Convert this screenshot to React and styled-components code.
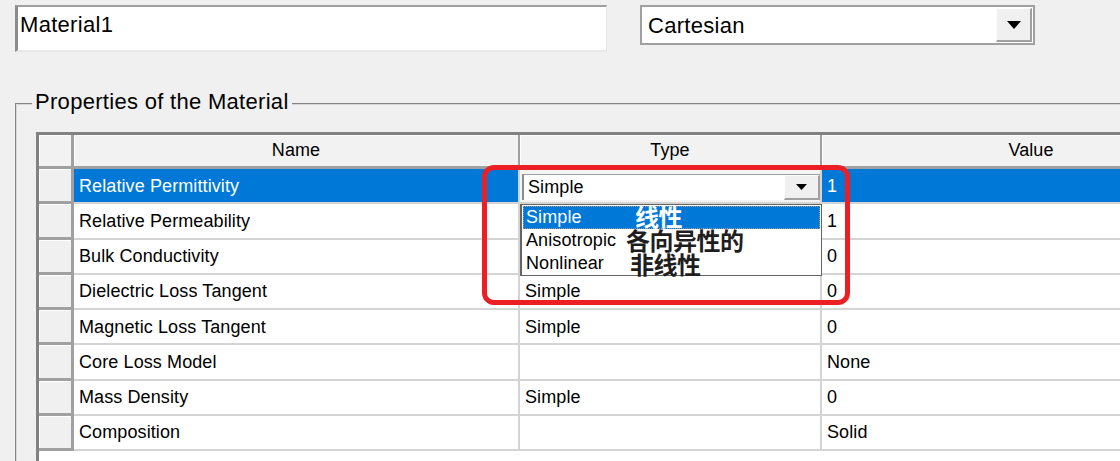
import React from "react";
import styled, { createGlobalStyle } from "styled-components";

const Global = createGlobalStyle`
  html, body { margin: 0; padding: 0; background: #f0f0f0; }
  body { overflow: hidden; }
  * { box-sizing: border-box; }
`;

const Page = styled.div`
  position: relative;
  width: 1120px;
  height: 461px;
  overflow: hidden;
  background: #f0f0f0;
  font-family: "Liberation Sans", Arial, sans-serif;
  color: #000;
`;

const TopRow = styled.div`
  display: grid;
  grid-template-columns: 592px 395px;
  column-gap: 33px;
  padding: 5px 0 0 15px;
  align-items: start;
`;

const TextBox = styled.div`
  height: 47px;
  background: #fff;
  border-top: 2px solid #a0a0a0;
  border-left: 3px solid #8c8c8c;
  border-right: 1px solid #e3e3e3;
  border-bottom: 2px solid #e8e8e8;
  padding: 5px 2px;
  font-size: 22px;
  line-height: 26px;
  letter-spacing: 0.3px;
`;

const Combo = styled.div`
  height: 40px;
  display: flex;
  align-items: stretch;
  background: #fff;
  border: 2px solid #a0a0a0;
  padding: 1px 1px 1px 0;
`;

const ComboText = styled.div`
  flex: 1;
  display: flex;
  align-items: center;
  padding: 1px 0 0 6px;
  font-size: 22px;
  letter-spacing: 0.3px;
`;

const DropButton = styled.div`
  width: ${(p) => p.$w}px;
  display: flex;
  align-items: center;
  justify-content: center;
  background: #f0f0f0;
  border-top: 1px solid #fdfdfd;
  border-left: 1px solid #fdfdfd;
  border-right: 2px solid #a0a0a0;
  border-bottom: 2px solid #a0a0a0;
`;

const Arrow = ({ w, h }) => (
  <svg width={w} height={h} viewBox={`0 0 ${w} ${h}`}>
    <polygon points={`0,0 ${w},0 ${w / 2},${h}`} fill="#000" />
  </svg>
);

const Group = styled.fieldset`
  margin: 38px 0 0 15px;
  padding: 0 0 0 19px;
  width: 1200px;
  min-width: 0;
  border: 2px groove #d8d8d8;
  border-right: none;
  border-bottom: none;
`;

const Legend = styled.legend`
  margin-left: -4px;
  padding: 1px 3px 5px 3px;
  font-size: 22px;
  line-height: 22px;
  letter-spacing: 0.3px;
`;

const GridFrame = styled.div`
  margin-top: 14px;
  display: grid;
  grid-template-columns: 35px 446px 302px 420px;
  grid-template-rows: 34px repeat(8, 35.25px);
  height: 340px;
  align-content: start;
  background: #fff;
  border-left: 3px solid #828282;
  border-top: 3px solid #828282;
  font-size: 18px;
  letter-spacing: 0.1px;
`;

const HeaderCell = styled.div`
  display: flex;
  align-items: center;
  justify-content: center;
  background: #f2f2f2;
  border-right: ${(p) => (p.$corner ? "3px" : "2px")} solid #a0a0a0;
  border-bottom: 3px solid #a0a0a0;
  box-shadow: inset 1px 1px 0 #fff;
`;

const RowHeader = styled.div`
  background: #f0f0f0;
  border-right: 3px solid #a0a0a0;
  border-bottom: 3px solid #a0a0a0;
  box-shadow: inset 1px 1px 0 #fff;
`;

const Cell = styled.div`
  position: relative;
  display: flex;
  align-items: center;
  padding: 1px 0 0 5px;
  white-space: nowrap;
  border-right: 2px solid #d4d4d4;
  border-bottom: 2px solid #d4d4d4;
  background: ${(p) => (p.$selected ? "#0078d7" : "#fff")};
  color: ${(p) => (p.$selected ? "#fff" : "#000")};
`;

const EditCell = styled.div`
  position: relative;
  display: flex;
  align-items: stretch;
  padding: 5px 0 2px 2px;
  background: #f4f4f4;
  border-right: 2px solid #d4d4d4;
  border-bottom: 2px solid #d4d4d4;
  z-index: 2;
`;

const CellCombo = styled.div`
  flex: 1;
  display: flex;
  background: #fff;
  border-left: 2px solid #8c8c8c;
  border-top: 1px solid #a0a0a0;
`;

const CellComboText = styled.div`
  flex: 1;
  display: flex;
  align-items: center;
  padding-left: 4px;
`;

const List = styled.div`
  position: absolute;
  top: calc(100% + 2px);
  left: 0;
  width: 302px;
  height: 72px;
  background: #fff;
  border: 1px solid #646464;
  border-left-width: 2px;
  padding: 1px 1px;
  display: flex;
  flex-direction: column;
`;

const Item = styled.div`
  position: relative;
  height: ${(p) => p.$h}px;
  display: flex;
  align-items: center;
  padding-left: 3px;
  background: ${(p) => (p.$active ? "#0078d7" : "transparent")};
  color: ${(p) => (p.$active ? "#fff" : "#000")};
  outline: ${(p) => (p.$active ? "1px dotted #9a9a9a" : "none")};
  outline-offset: -1px;
`;

const Note = styled.span`
  position: absolute;
  left: ${(p) => p.$x}px;
  top: ${(p) => p.$y}px;
  font-family: "Noto Sans CJK SC", "Noto Sans", sans-serif;
  font-weight: 700;
  font-size: 24px;
  line-height: 24px;
  letter-spacing: -0.5px;
  color: ${(p) => (p.$light ? "#ffffff" : "#1e1e1e")};
  white-space: nowrap;
  z-index: 3;
`;

const RedMark = styled.div`
  position: absolute;
  left: 482px;
  top: 165px;
  width: 368px;
  height: 140px;
  border: 5.5px solid #ec2024;
  border-radius: 12px;
  z-index: 5;
  pointer-events: none;
`;

const rows = [
  ["Relative Permittivity", "Simple", "1"],
  ["Relative Permeability", "Simple", "1"],
  ["Bulk Conductivity", "Simple", "0"],
  ["Dielectric Loss Tangent", "Simple", "0"],
  ["Magnetic Loss Tangent", "Simple", "0"],
  ["Core Loss Model", "", "None"],
  ["Mass Density", "Simple", "0"],
  ["Composition", "", "Solid"],
];

export default function App() {
  return (
    <Page>
      <Global />
      <TopRow>
        <TextBox>Material1</TextBox>
        <Combo>
          <ComboText>Cartesian</ComboText>
          <DropButton $w={36}>
            <Arrow w={14} h={8} />
          </DropButton>
        </Combo>
      </TopRow>

      <Group>
        <Legend>Properties of the Material</Legend>
        <GridFrame>
          <HeaderCell $corner />
          <HeaderCell>Name</HeaderCell>
          <HeaderCell>Type</HeaderCell>
          <HeaderCell>Value</HeaderCell>
          {rows.map(([name, type, value], i) => (
            <React.Fragment key={name}>
              <RowHeader />
              <Cell $selected={i === 0}>{name}</Cell>
              {i === 0 ? (
                <EditCell>
                  <CellCombo>
                    <CellComboText>{type}</CellComboText>
                    <DropButton $w={36}>
                      <Arrow w={11} h={6} />
                    </DropButton>
                  </CellCombo>
                  <List>
                    <Item $h={23} $active>
                      Simple
                      <Note $x={112} $y={-2} $light>
                        线性
                      </Note>
                    </Item>
                    <Item $h={23}>
                      Anisotropic
                      <Note $x={103} $y={-1}>
                        各向异性的
                      </Note>
                    </Item>
                    <Item $h={22}>
                      Nonlinear
                      <Note $x={107} $y={0}>
                        非线性
                      </Note>
                    </Item>
                  </List>
                </EditCell>
              ) : (
                <Cell>{type}</Cell>
              )}
              <Cell $selected={i === 0}>{value}</Cell>
            </React.Fragment>
          ))}
        </GridFrame>
      </Group>
      <RedMark />
    </Page>
  );
}
